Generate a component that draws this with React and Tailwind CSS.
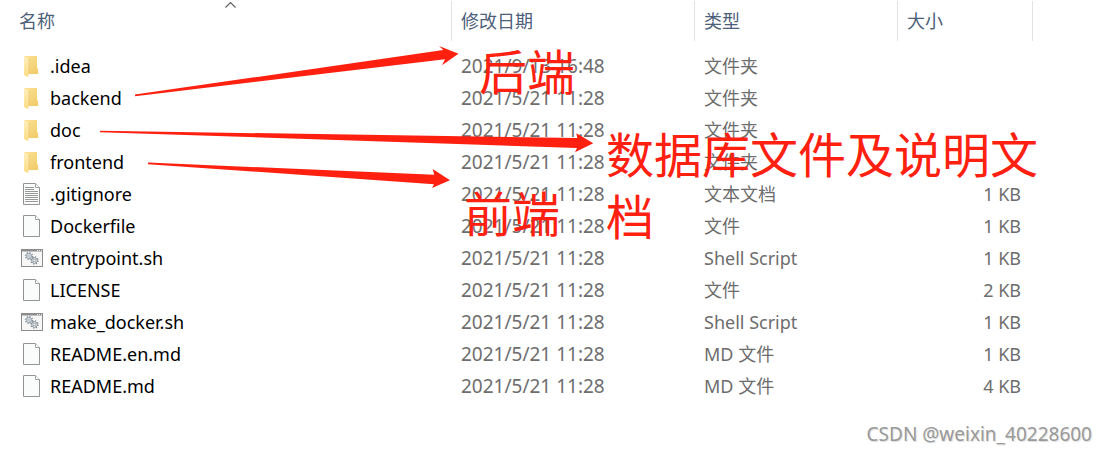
import React from "react";

const files = [
  { name: ".idea", date: "2021/9/13 16:48", type: "文件夹", size: "", icon: "folder" },
  { name: "backend", date: "2021/5/21 11:28", type: "文件夹", size: "", icon: "folder" },
  { name: "doc", date: "2021/5/21 11:28", type: "文件夹", size: "", icon: "folder" },
  { name: "frontend", date: "2021/5/21 11:28", type: "文件夹", size: "", icon: "folder" },
  { name: ".gitignore", date: "2021/5/21 11:28", type: "文本文档", size: "1 KB", icon: "text" },
  { name: "Dockerfile", date: "2021/5/21 11:28", type: "文件", size: "1 KB", icon: "file" },
  { name: "entrypoint.sh", date: "2021/5/21 11:28", type: "Shell Script", size: "1 KB", icon: "script" },
  { name: "LICENSE", date: "2021/5/21 11:28", type: "文件", size: "2 KB", icon: "file" },
  { name: "make_docker.sh", date: "2021/5/21 11:28", type: "Shell Script", size: "1 KB", icon: "script" },
  { name: "README.en.md", date: "2021/5/21 11:28", type: "MD 文件", size: "1 KB", icon: "file" },
  { name: "README.md", date: "2021/5/21 11:28", type: "MD 文件", size: "4 KB", icon: "file" },
];

function FolderIcon() {
  return (
    <svg width="24" height="24" viewBox="0 0 24 24" aria-hidden="true">
      <defs>
        <linearGradient id="folderBack" x1="0" y1="0" x2="1" y2="1">
          <stop offset="0" stopColor="#fbe19a" />
          <stop offset="1" stopColor="#f0ca63" />
        </linearGradient>
        <linearGradient id="folderFlap" x1="0" y1="0" x2="0" y2="1">
          <stop offset="0" stopColor="#fff0bd" />
          <stop offset="1" stopColor="#fbdc83" />
        </linearGradient>
      </defs>
      <path d="M4 2h13v12l1 1v5H5z" fill="url(#folderBack)" />
      <path d="M4 2l5 3v15l-1 3l-4-2z" fill="url(#folderFlap)" />
      <path d="M9 5v15" stroke="#eac767" strokeWidth=".7" />
    </svg>
  );
}

function PageIcon({ lined }) {
  return (
    <svg width="24" height="24" viewBox="0 0 24 24" aria-hidden="true">
      <path d="M3.5 1.5h12l4 4v17h-16z" fill="#fafbfb" stroke="#949494" />
      <path d="M15.5 1.5v4h4" fill="#fff" stroke="#a0a0a0" />
      {lined && (
        <path
          d="M5 5.5h9M5 7.5h9M5 9.5h13M5 11.5h13M5 13.5h13M5 15.5h13M5 17.5h13M5 19.5h13"
          stroke="#999999"
        />
      )}
    </svg>
  );
}

function ScriptIcon() {
  return (
    <svg width="24" height="24" viewBox="0 0 24 24" aria-hidden="true">
      <rect x="1.5" y="3.5" width="21" height="17" fill="#f7f7f7" stroke="#8c8c8c" />
      <path d="M1 4.5h22" stroke="#8c8c8c" strokeWidth="2" />
      <path d="M17 4.5h1M19 4.5h1M21 4.5h1" stroke="#e8e8e8" />
      <circle cx="9" cy="10" r="2.8" fill="#dde3e8" stroke="#8d99a3" strokeWidth=".8" />
      <circle cx="9" cy="10" r="3.6" fill="none" stroke="#8d99a3" strokeWidth="1.2" strokeDasharray="1.3 1.53" />
      <circle cx="9" cy="10" r="1.2" fill="#fff" stroke="#8d99a3" strokeWidth=".7" />
      <circle cx="14.5" cy="14.5" r="2.8" fill="#dde3e8" stroke="#7e868e" strokeWidth=".8" />
      <circle cx="14.5" cy="14.5" r="3.6" fill="none" stroke="#7e868e" strokeWidth="1.2" strokeDasharray="1.3 1.53" />
      <circle cx="14.5" cy="14.5" r="1.2" fill="#fff" stroke="#7e868e" strokeWidth=".7" />
    </svg>
  );
}

function FileIcon({ kind }) {
  if (kind === "folder") return <FolderIcon />;
  if (kind === "script") return <ScriptIcon />;
  return <PageIcon lined={kind === "text"} />;
}

function HeaderCell({ label, first }) {
  return (
    <th scope="col" aria-sort={first ? "ascending" : undefined} className="p-0 pb-[9px] font-normal">
      <div className="relative pt-px">
        <button
          type="button"
          className={`flex h-10 w-full items-center border-r border-[#e2e2e2] text-left text-[#4c607a] ${first ? "pl-[19px]" : "pl-[9px]"}`}
        >
          {label}
        </button>
        {first && (
          <svg className="absolute top-0 left-1/2 -ml-px" width="12" height="8" viewBox="0 0 12 8" aria-hidden="true">
            <path d="M0.5 7.5L5.5 2.5L10.5 7.5" fill="none" stroke="#5c5c5c" strokeWidth="1.1" />
          </svg>
        )}
      </div>
    </th>
  );
}

function Annotations() {
  return (
    <div className="pointer-events-none absolute inset-0 text-5xl text-[#ff2010]">
      <svg className="absolute top-0 left-0" width="620" height="200" viewBox="0 0 620 200" fill="#ff2010" aria-hidden="true">
        <path d="M135 94.6L443.3 50L439 46L458.5 53.7L442 65.3L445 59.3L135 96.2Z" />
        <path d="M100 130.8L577.3 138L576.3 133.3L593.3 143.3L575 152.3L577 148L100 132.2Z" />
        <path d="M148 162.6L434.3 174.7L432.7 169L450 180.3L432 188L434 184.2L148 164.2Z" />
      </svg>
      <p className="absolute top-[41px] left-[479px] leading-[62px]">后端</p>
      <p className="absolute top-[183px] left-[464px] leading-[62px]">前端</p>
      <p className="absolute top-[124px] left-[606px] w-[440px] leading-[62px]">数据库文件及说明文档</p>
    </div>
  );
}

export default function App() {
  return (
    <main className="relative flex min-h-screen flex-col bg-white font-['Noto_Sans','Noto_Sans_CJK_SC',sans-serif] text-lg">
      <table className="w-full table-fixed border-collapse text-[#6d6d6d]">
        <colgroup>
          <col className="w-[452px]" />
          <col className="w-[243px]" />
          <col className="w-[203px]" />
          <col className="w-[135px]" />
          <col />
        </colgroup>
        <thead>
          <tr>
            <HeaderCell label="名称" first />
            <HeaderCell label="修改日期" />
            <HeaderCell label="类型" />
            <HeaderCell label="大小" />
            <td />
          </tr>
        </thead>
        <tbody>
          {files.map((file) => (
            <tr key={file.name} className="h-8">
              <td className="p-0 pl-5 text-black">
                <div className="flex h-8 items-center gap-1.5">
                  <FileIcon kind={file.icon} />
                  <span>{file.name}</span>
                </div>
              </td>
              <td className="p-0 pl-[9px] text-[19px] leading-8">{file.date}</td>
              <td className="p-0 pl-[9px] leading-8">{file.type}</td>
              <td className="p-0 pr-3 text-right leading-8">{file.size}</td>
              <td />
            </tr>
          ))}
        </tbody>
      </table>
      <footer className="mt-auto pr-4 pb-1.5 text-right text-[19px] leading-7 text-[#999999] [text-shadow:1px_1px_1px_#dddddd]">
        CSDN @weixin_40228600
      </footer>
      <Annotations />
    </main>
  );
}
